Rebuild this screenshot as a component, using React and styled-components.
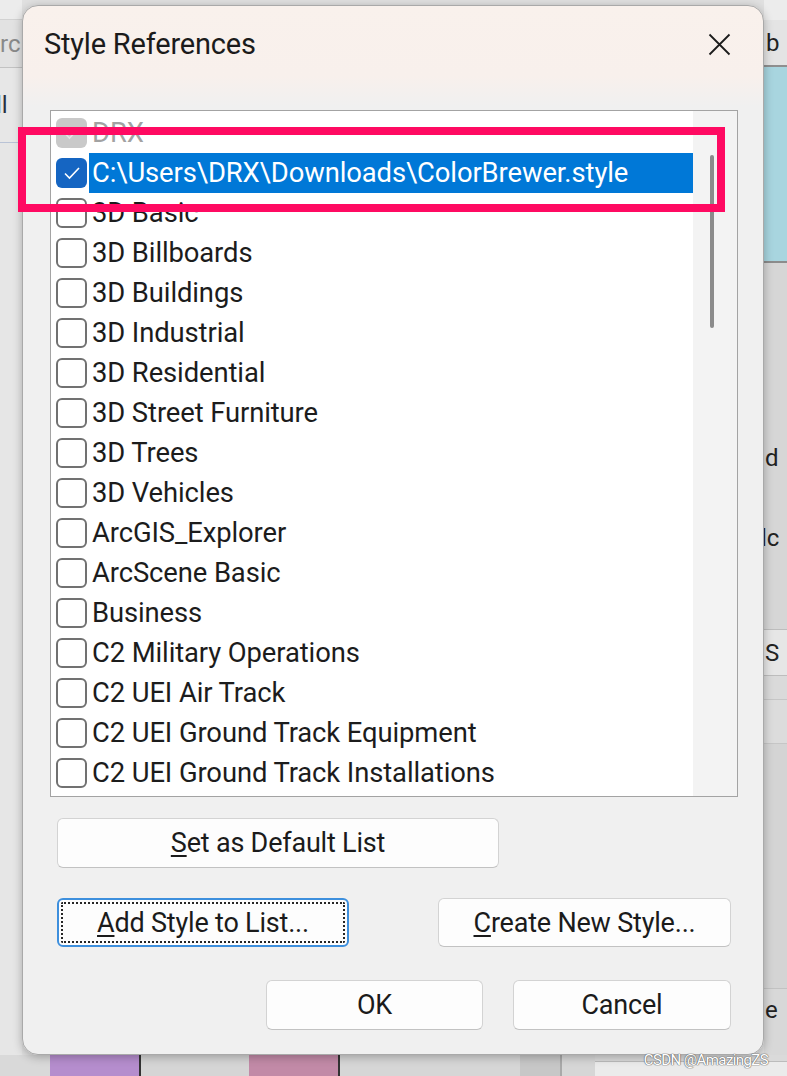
import React from 'react'
import styled, { createGlobalStyle } from 'styled-components'

const GlobalStyle = createGlobalStyle`
  html, body {
    margin: 0;
    padding: 0;
  }
  body {
    width: 787px;
    height: 1076px;
    overflow: hidden;
    background: #e2e2e2;
    font-family: Roboto, "Liberation Sans", sans-serif;
  }
`

const Page = styled.div`
  position: relative;
  width: 787px;
  height: 1076px;
  display: grid;
  grid-template-columns: 22px 1fr 23px;
  grid-template-rows: 1fr 21px;
  background: #e0e0e0;
  overflow: hidden;
`

/* ---------- window behind the dialog ---------- */

const SideStrip = styled.div`
  display: flex;
  flex-direction: column;
  overflow: hidden;
  background: #e8e8e8;
`

const StripBlock = styled.div`
  height: ${p => p.h}px;
  flex: ${p => (p.grow ? 1 : 'none')};
  background: ${p => p.bg || 'transparent'};
  border-bottom: ${p => p.line || 'none'};
  color: ${p => p.color || '#2a2a2a'};
  font-size: 24px;
  line-height: ${p => p.h}px;
  white-space: nowrap;
  padding-left: ${p => p.pad || 0}px;
  box-sizing: border-box;
`

const BottomStrip = styled.div`
  grid-column: 1 / -1;
  display: flex;
  background: #dadada;
`

const Swatch = styled.div`
  width: ${p => p.w}px;
  flex: ${p => (p.grow ? 1 : 'none')};
  background: ${p => p.bg};
  border-right: ${p => p.line || 'none'};
  border-top: ${p => p.top || 'none'};
  margin-top: ${p => p.mt || 0}px;
`

/* ---------- dialog ---------- */

const Dialog = styled.div`
  position: absolute;
  left: 22px;
  top: 5px;
  width: 742px;
  height: 1050px;
  box-sizing: border-box;
  border: 1px solid #a9a9a9;
  border-radius: 16px;
  background: linear-gradient(180deg, #f9f1ec 0px, #f8f0ec 70px, #f0f0f0 100px, #f0f0f0 100%);
  box-shadow: 0 2px 10px rgba(0, 0, 0, 0.28);
  display: flex;
  flex-direction: column;
  color: #1b1b1b;
`

const TitleBar = styled.div`
  height: 74px;
  flex: none;
  display: flex;
  align-items: center;
  justify-content: space-between;
  padding: 2px 32px 0 21px;
  box-sizing: border-box;
`

const Title = styled.div`
  font-size: 29px;
  letter-spacing: -0.2px;
`

const CloseButton = styled.div`
  width: 23px;
  height: 23px;
  display: flex;
`

const Body = styled.div`
  flex: 1;
  padding: 30px 25px 0 27px;
  display: flex;
  flex-direction: column;
`

const ListBox = styled.div`
  height: 687px;
  box-sizing: border-box;
  border: 1px solid #a3a3a3;
  background: #fff;
  display: flex;
  overflow: hidden;
`

const Items = styled.div`
  flex: 1;
  padding-top: 2px;
  overflow: hidden;
`

const Row = styled.div`
  height: 40px;
  display: flex;
  align-items: center;
`

const Box = styled.div`
  width: 31px;
  height: 30px;
  flex: none;
  margin-left: 5px;
  box-sizing: border-box;
  border-radius: 6px;
  border: ${p => (p.state === 'empty' ? '2px solid #717171' : 'none')};
  background: ${p =>
    p.state === 'checked' ? '#1565c2' : p.state === 'disabled' ? '#c9c9c9' : '#fff'};
  display: flex;
  align-items: center;
  justify-content: center;
`

const Label = styled.div`
  flex: 1;
  height: 40px;
  margin-left: 2px;
  padding-left: 3px;
  font-size: 27.4px;
  line-height: 40px;
  white-space: nowrap;
  letter-spacing: -0.1px;
  color: ${p => (p.selected ? '#fff' : p.disabled ? '#a2a2a2' : '#1c1c1c')};
  background: ${p => (p.selected ? '#0078d7' : 'transparent')};
`

const Gutter = styled.div`
  width: 44px;
  flex: none;
  background: #f3f3f3;
  padding-top: 44px;
  box-sizing: border-box;
`

const Thumb = styled.div`
  width: 4px;
  height: 173px;
  margin-left: 17px;
  border-radius: 2px;
  background: #8b8b8b;
`

const ButtonRow = styled.div`
  margin-top: ${p => p.mt}px;
  display: flex;
  justify-content: ${p => p.justify || 'flex-start'};
  gap: ${p => p.gap || 0}px;
  padding: 0 7px 0 7px;
`

const Button = styled.div`
  width: ${p => p.w}px;
  height: ${p => p.h || 50}px;
  box-sizing: border-box;
  border-radius: 6px;
  background: #fdfdfd;
  border: ${p => (p.focused ? '2px solid #3d8fdd' : '1px solid #d3d3d3')};
  border-bottom-color: ${p => (p.focused ? '#3d8fdd' : '#c2c2c2')};
  outline: ${p => (p.focused ? '2px dotted #262626' : 'none')};
  outline-offset: -6px;
  display: flex;
  align-items: center;
  justify-content: center;
  font-size: 27px;
  letter-spacing: -0.2px;
  color: #1b1b1b;
`

const Key = styled.span`
  text-decoration: underline;
  text-decoration-thickness: 1.5px;
  text-underline-offset: 3px;
`

/* ---------- overlays ---------- */

const Annotation = styled.div`
  position: absolute;
  left: 18px;
  top: 127px;
  width: 707px;
  height: 85px;
  box-sizing: border-box;
  border: 8px solid #ff0a62;
  pointer-events: none;
`

const Watermark = styled.div`
  position: absolute;
  right: 19px;
  bottom: 7px;
  font-size: 15px;
  letter-spacing: -0.6px;
  color: #fff;
  text-shadow: 0 0 1px #666, 0 0 1px #666, 0 0 1px #666;
`

const Check = ({ color }) => (
  <svg width="18" height="14" viewBox="0 0 18 14">
    <polyline points="2,7.5 6.5,12 16,2" fill="none" stroke={color} strokeWidth="1.6" />
  </svg>
)

const items = [
  { name: 'DRX', state: 'disabled' },
  { name: 'C:\\Users\\DRX\\Downloads\\ColorBrewer.style', state: 'checked', selected: true },
  { name: '3D Basic' },
  { name: '3D Billboards' },
  { name: '3D Buildings' },
  { name: '3D Industrial' },
  { name: '3D Residential' },
  { name: '3D Street Furniture' },
  { name: '3D Trees' },
  { name: '3D Vehicles' },
  { name: 'ArcGIS_Explorer' },
  { name: 'ArcScene Basic' },
  { name: 'Business' },
  { name: 'C2 Military Operations' },
  { name: 'C2 UEI Air Track' },
  { name: 'C2 UEI Ground Track Equipment' },
  { name: 'C2 UEI Ground Track Installations' },
]

export default function App() {
  return (
    <Page>
      <GlobalStyle />

      <SideStrip>
        <StripBlock h={20} bg="#ececec" line="1px solid #d2d2d2" />
        <StripBlock h={48} bg="#e2e2e2" line="1px solid #c2c2c2" color="#8a8a8a">
          rc
        </StripBlock>
        <StripBlock h={75} bg="#e7e7e7" line="1px solid #b9c3d6" color="#2b3040" pad={0}>
          <span style={{ marginLeft: -4 }}>ll</span>
        </StripBlock>
        <StripBlock grow bg="#e6e6e6" />
      </SideStrip>

      <div />

      <SideStrip>
        <StripBlock h={20} bg="#ececec" />
        <StripBlock h={47} bg="#e4e4e4" line="2px solid #8f8f8f" color="#222" pad={2}>
          b
        </StripBlock>
        <StripBlock h={196} bg="#a8d5df" line="2px solid #8c8c8c" />
        <StripBlock h={175} bg="#d6d6d6" />
        <StripBlock h={40} bg="#d6d6d6" color="#222" pad={1}>d</StripBlock>
        <StripBlock h={40} bg="#d6d6d6" />
        <StripBlock h={40} bg="#d6d6d6" color="#222">
          <span style={{ marginLeft: -3 }}>lc</span>
        </StripBlock>
        <StripBlock h={72} bg="#d6d6d6" line="1px solid #bdbdbd" />
        <StripBlock h={46} bg="#e6e6e6" line="1px solid #bdbdbd" color="#222" pad={1}>S</StripBlock>
        <StripBlock h={24} bg="#dadada" line="1px solid #c6c6c6" />
        <StripBlock h={44} bg="#dcdcdc" line="1px solid #c6c6c6" />
        <StripBlock h={245} bg="#d4d4d4" line="1px solid #c2c2c2" />
        <StripBlock h={42} bg="#d8d8d8" color="#222" pad={1}>e</StripBlock>
        <StripBlock grow bg="#d8d8d8" />
      </SideStrip>

      <BottomStrip>
        <Swatch w={50} bg="#d9d9d9" />
        <Swatch w={89} bg="#b58dcd" line="2px solid #333" />
        <Swatch w={108} bg="#d5d5d5" />
        <Swatch w={89} bg="#c28aa7" line="2px solid #333" />
        <Swatch w={180} bg="#d6d6d6" />
        <Swatch w={40} bg="#c7c7c7" line="2px solid #a9a9a9" />
        <Swatch w={33} bg="#d6d6d6" />
        <Swatch grow bg="#ebebeb" top="1px solid #bcbcbc" mt={6} />
      </BottomStrip>

      <Dialog>
        <TitleBar>
          <Title>Style References</Title>
          <CloseButton>
            <svg width="23" height="23" viewBox="0 0 23 23">
              <path d="M1.5 1.5 L21.5 21.5 M21.5 1.5 L1.5 21.5" stroke="#1b1b1b" strokeWidth="1.8" />
            </svg>
          </CloseButton>
        </TitleBar>

        <Body>
          <ListBox>
            <Items>
              {items.map(item => (
                <Row key={item.name}>
                  <Box state={item.state || 'empty'}>
                    {item.state === 'checked' && <Check color="#fff" />}
                    {item.state === 'disabled' && <Check color="#e4e4e4" />}
                  </Box>
                  <Label selected={item.selected} disabled={item.state === 'disabled'}>
                    {item.name}
                  </Label>
                </Row>
              ))}
            </Items>
            <Gutter>
              <Thumb />
            </Gutter>
          </ListBox>

          <ButtonRow mt={21}>
            <Button w={442}>
              <span><Key>S</Key>et as Default List</span>
            </Button>
          </ButtonRow>

          <ButtonRow mt={30} justify="space-between">
            <Button w={292} h={49} focused>
              <span><Key>A</Key>dd Style to List...</span>
            </Button>
            <Button w={293} h={49}>
              <span><Key>C</Key>reate New Style...</span>
            </Button>
          </ButtonRow>

          <ButtonRow mt={33} justify="flex-end" gap={30}>
            <Button w={217}>OK</Button>
            <Button w={218}>Cancel</Button>
          </ButtonRow>
        </Body>
      </Dialog>

      <Annotation />
      <Watermark>CSDN @AmazingZS</Watermark>
    </Page>
  )
}
